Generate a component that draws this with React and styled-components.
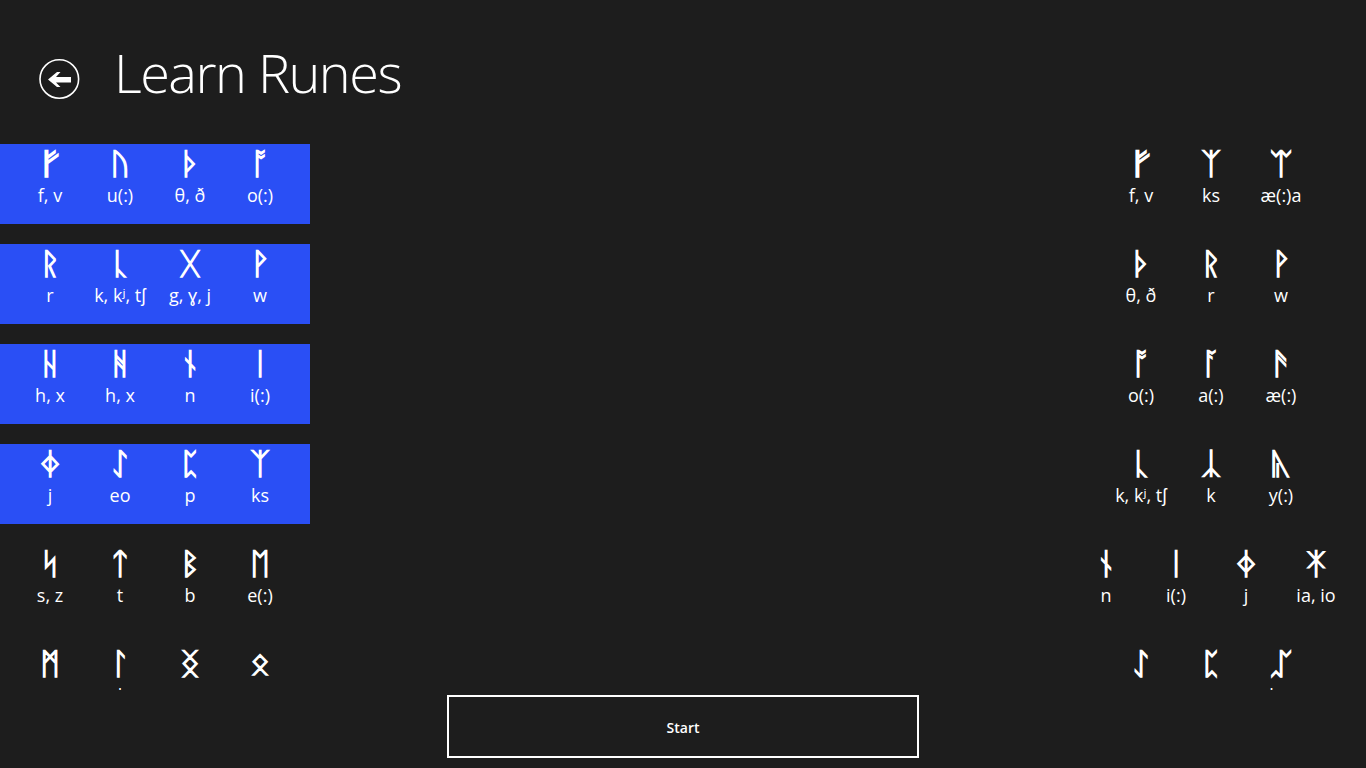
import React from "react";
import styled, { createGlobalStyle } from "styled-components";

const leftRows = [
  { on: true, items: [["ᚠ", "f, v"], ["ᚢ", "u(:)"], ["ᚦ", "θ, ð"], ["ᚩ", "o(:)"]] },
  { on: true, items: [["ᚱ", "r"], ["ᚳ", "k, kʲ, tʃ"], ["ᚷ", "g, ɣ, j"], ["ᚹ", "w"]] },
  { on: true, items: [["ᚺ", "h, x"], ["ᚻ", "h, x"], ["ᚾ", "n"], ["ᛁ", "i(:)"]] },
  { on: true, items: [["ᛄ", "j"], ["ᛇ", "eo"], ["ᛈ", "p"], ["ᛉ", "ks"]] },
  { items: [["ᛋ", "s, z"], ["ᛏ", "t"], ["ᛒ", "b"], ["ᛖ", "e(:)"]] },
  { items: [["ᛗ", "m"], ["ᛚ", "l"], ["ᛝ", "ŋ"], ["ᛟ", "œ"]] },
];

const rightRows = [
  [["ᚠ", "f, v"], ["ᛉ", "ks"], ["ᛠ", "æ(:)a"]],
  [["ᚦ", "θ, ð"], ["ᚱ", "r"], ["ᚹ", "w"]],
  [["ᚩ", "o(:)"], ["ᚪ", "a(:)"], ["ᚫ", "æ(:)"]],
  [["ᚳ", "k, kʲ, tʃ"], ["ᛣ", "k"], ["ᚣ", "y(:)"]],
  [["ᚾ", "n"], ["ᛁ", "i(:)"], ["ᛄ", "j"], ["ᛡ", "ia, io"]],
  [["ᛇ", "eo"], ["ᛈ", "p"], ["ᛢ", "kw"]],
];

const GlobalStyle = createGlobalStyle`
  html, body {
    margin: 0;
    height: 100%;
    background: #1d1d1d;
    overflow: hidden;
  }
`;

function RuneRow({ items, on }) {
  return (
    <Row $on={on}>
      {items.map(([rune, sound], i) => (
        <Cell key={i}>
          <Rune $wide={rune === "ᚠ"}>{rune}</Rune>
          <Sound>{sound}</Sound>
        </Cell>
      ))}
    </Row>
  );
}

function App() {
  return (
    <Page>
      <GlobalStyle />
      <Header>
        <BackButton aria-label="Back">
          <svg width="42" height="42" viewBox="0 0 42 42">
            <circle cx="21.3" cy="21" r="19.3" fill="none" stroke="#fff" strokeWidth="1.6" />
            <path d="M10 21.5 L19 14 L22.5 14 L18 19 L33 19 L33 24.5 L18 24.5 L22.5 29 L19 29 Z" fill="#fff" />
          </svg>
        </BackButton>
        <Title>Learn Runes</Title>
      </Header>
      <Main>
        <RuneList>
          {leftRows.map((row, i) => (
            <RuneRow key={i} items={row.items} on={row.on} />
          ))}
        </RuneList>
        <RuneList>
          {rightRows.map((items, i) => (
            <RuneRow key={i} items={items} />
          ))}
        </RuneList>
      </Main>
      <Footer>
        <StartButton>Start</StartButton>
      </Footer>
    </Page>
  );
}

const Page = styled.div`
  width: 1366px;
  height: 768px;
  display: flex;
  flex-direction: column;
  background: #1d1d1d;
  color: #fff;
  font-family: "Open Sans", "Noto Sans", sans-serif;
`;

const Header = styled.header`
  height: 144px;
  display: flex;
  align-items: flex-start;
  padding: 35px 0 0 38px;
  box-sizing: border-box;
`;

const BackButton = styled.button`
  width: 42px;
  height: 42px;
  padding: 0;
  margin-top: 23px;
  border: 0;
  background: none;
  display: block;
`;

const Title = styled.h1`
  margin: 0 0 0 34px;
  font-size: 54px;
  font-weight: 300;
  line-height: 74px;
  letter-spacing: -1.5px;
`;

const Main = styled.main`
  height: 546px;
  display: flex;
  justify-content: space-between;
  overflow: hidden;
`;

const RuneList = styled.div`
  width: 310px;
  display: flex;
  flex-direction: column;
  gap: 20px;
`;

const Row = styled.div`
  height: 80px;
  flex: none;
  display: flex;
  justify-content: center;
  background: ${(p) => (p.$on ? "#2a4ff5" : "transparent")};
`;

const Cell = styled.div`
  width: 70px;
  display: flex;
  flex-direction: column;
  align-items: center;
`;

const Rune = styled.div`
  font-size: 30px;
  line-height: 40px;
  height: 39px;
  font-family: "DejaVu Sans", sans-serif;
  -webkit-text-stroke: 1.2px #fff;
  transform: scaleX(${(p) => (p.$wide ? 1.6 : 1.12)});
`;

const Sound = styled.div`
  font-size: 18px;
  line-height: 24px;
  white-space: nowrap;
`;

const Footer = styled.footer`
  flex: 1;
  display: flex;
  justify-content: center;
  padding-top: 5px;
`;

const StartButton = styled.button`
  width: 472px;
  height: 63px;
  padding: 2px 0 0;
  background: none;
  border: 2px solid #fff;
  color: #fff;
  font-family: "Open Sans", sans-serif;
  font-weight: 600;
  font-size: 14px;
`;

export default App;
